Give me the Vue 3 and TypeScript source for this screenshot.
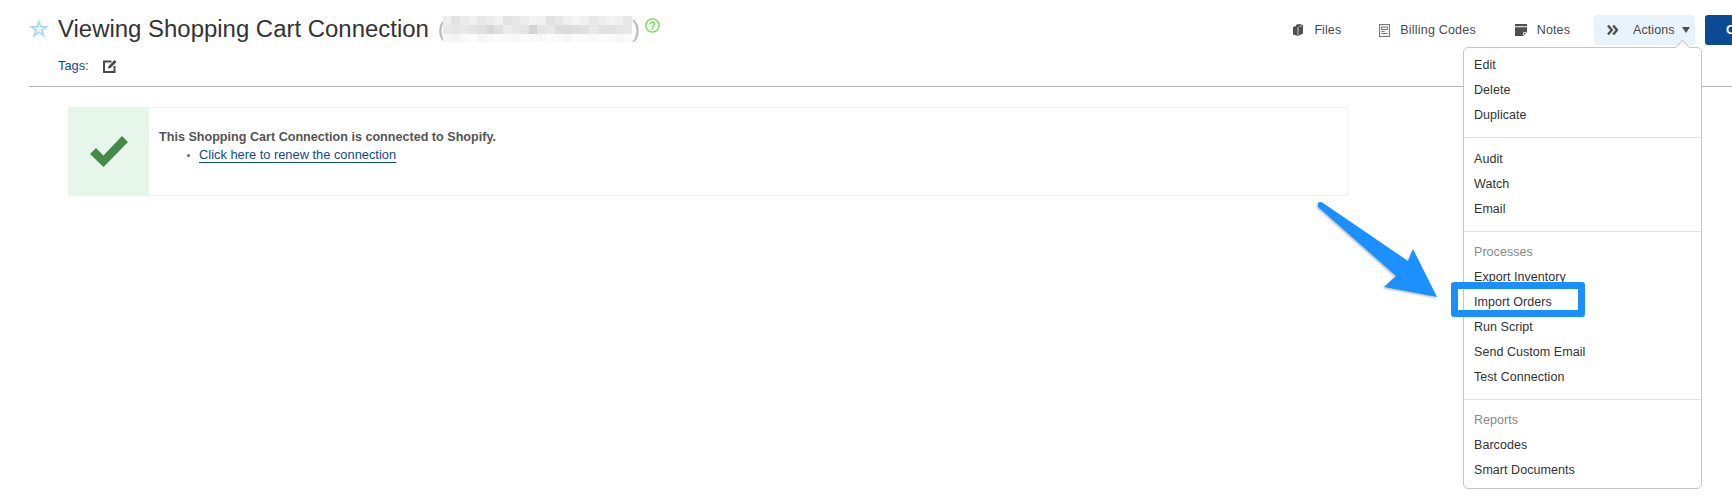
<template>
  <div class="page">
    <header class="header">
      <div class="title-block">
        <div class="title-row">
          <svg class="star" viewBox="0 0 20 19" width="20" height="19">
            <path d="M10 0l2.400 6.900H20l-6.100 4.500 2.300 7.200L10 14.200l-6.200 4.400 2.300-7.200L0 6.900h7.600z" fill="#a6d8f5" />
            <path d="M10 5l1.200 3.600h3.800l-3.100 2.300 1.200 3.700-3.100-2.300-3.100 2.300 1.200-3.700L5 8.600h3.800z" fill="#eef8fe" />
          </svg>
          <h1 class="title">Viewing Shopping Cart Connection</h1>
          <span class="paren">(</span>
          <span class="blurred">
            <i v-for="(shade, i) in blurCells" :key="i" :style="{ background: shade }"></i>
          </span>
          <span class="paren close">)</span>
          <svg class="help" viewBox="0 0 15 15" width="15" height="15">
            <circle cx="7.500" cy="7.500" r="6.600" fill="none" stroke="#72d957" stroke-width="1.300" />
            <path d="M5.300 6c0-2.700 4.400-2.700 4.400 0 0 1.600-2.200 1.500-2.200 3" fill="none" stroke="#72d957" stroke-width="1.300" />
            <rect x="6.800" y="10" width="1.400" height="1.500" fill="#72d957" />
          </svg>
        </div>
        <div class="tags-row">
          <span class="tags-label">Tags:</span>
          <svg class="tag-edit" viewBox="0 0 15 14" width="15" height="14">
            <path d="M8.500 2.500H1v10.500h10.500V7" fill="none" stroke="#4a4a4a" stroke-width="2" />
            <path d="M5 9.500l.6-2.600L11.500 1l2 2-5.900 6z" fill="#4a4a4a" />
          </svg>
        </div>
      </div>

      <nav class="toolbar">
        <a class="tool files">
          <svg viewBox="0 0 10 12" width="10" height="12">
            <path d="M0 3l3-1V.8L6.500 0 10 1v8.500L5 12l-5-1.500z" fill="#4f4f4f" />
            <path d="M5 3v8.500M6.500 2.500L9 1.800" stroke="#fff" stroke-width=".7" />
          </svg>
          Files
        </a>
        <a class="tool billing">
          <svg viewBox="0 0 11 13" width="11" height="13">
            <rect x=".5" y=".5" width="10" height="12" fill="#f1f1f1" stroke="#777" />
            <path d="M2.500 3h6v2.500h-6zM2.500 7.500h3M2.500 9.500h6" fill="none" stroke="#777" />
          </svg>
          Billing Codes
        </a>
        <a class="tool notes">
          <svg viewBox="0 0 12 12" width="12" height="12">
            <path d="M0 0h12v2.300H0zM0 3.300h12V8l-4 4H0z" fill="#4f4f4f" />
            <path d="M8.500 11V8.500H11" fill="none" stroke="#fff" stroke-width=".8" />
          </svg>
          Notes
        </a>
        <div class="actions-wrap">
          <a class="tool actions">
            <svg viewBox="0 0 12 10" width="12" height="10">
              <path d="M1 .5L4.800 5 1 9.500M6.200 .5L10 5 6.200 9.500" fill="none" stroke="#4f4f4f" stroke-width="2.400" />
            </svg>
            <span class="actions-label">Actions</span>
            <span class="caret"></span>
          </a>
          <div class="menu">
            <section v-for="group in menuGroups" :key="group.items[0]" class="menu-group">
              <div v-if="group.title" class="menu-title">{{ group.title }}</div>
              <a v-for="item in group.items" :key="item" class="menu-item">{{ item }}</a>
            </section>
          </div>
        </div>
        <button class="primary" type="button">C</button>
      </nav>
    </header>

    <main class="content">
      <div class="alert">
        <div class="alert-icon">
          <svg viewBox="0 0 38 31" width="38" height="31">
            <path d="M0 18l6-6 7.500 7.500L32 0l6 6-24.500 25z" fill="#468a49" />
          </svg>
        </div>
        <div class="alert-body">
          <strong>This Shopping Cart Connection is connected to Shopify.</strong>
          <ul>
            <li><a>Click here to renew the connection</a></li>
          </ul>
        </div>
      </div>
    </main>

    <!-- annotation drawn on top of the screenshot -->
    <svg class="pointer" viewBox="0 0 130 100" width="130" height="100">
      <defs>
        <filter id="arrow-shadow" x="-10%" y="-10%" width="120%" height="120%">
          <feDropShadow dx="-1" dy="1" stdDeviation="1" flood-color="#000" flood-opacity=".3" />
        </filter>
      </defs>
      <path
        d="M3 4.500C4 2.500 6 2.500 8 4L93 62 98 50 122 98 69 88 81 77 3 8z"
        fill="#1a90ff"
        filter="url(#arrow-shadow)"
      />
    </svg>
    <div class="highlight"></div>
  </div>
</template>

<script setup lang="ts">
interface MenuGroup {
  title?: string
  items: string[]
}

const menuGroups: MenuGroup[] = [
  { items: ['Edit', 'Delete', 'Duplicate'] },
  { items: ['Audit', 'Watch', 'Email'] },
  { title: 'Processes', items: ['Export Inventory', 'Import Orders', 'Run Script', 'Send Custom Email', 'Test Connection'] },
  { title: 'Reports', items: ['Barcodes', 'Smart Documents'] }
]

// pixelated name, kept as a mosaic of greys
const rows = [
  [238, 226, 234, 240, 232, 236, 242, 228, 232, 236, 244, 240, 226, 232, 240, 244, 240, 232, 238, 242, 240, 232],
  [232, 230, 232, 228, 224, 216, 224, 236, 232, 228, 212, 228, 232, 222, 220, 222, 224, 232, 226, 224, 228, 232],
  [246, 244, 250, 252, 246, 250, 252, 250, 248, 252, 250, 248, 252, 250, 246, 252, 250, 248, 252, 250, 246, 250]
]
const blurCells = rows.flat().map((v) => `rgb(${v}, ${v}, ${v})`)
</script>

<style scoped>
.page {
  position: relative;
  width: 1732px;
  height: 501px;
  overflow: hidden;
  background: #fff;
  color: #333;
  font-family: "Liberation Sans", Arial, sans-serif;
}

.header {
  display: flex;
  justify-content: space-between;
  height: 86px;
  margin-left: 29px;
  border-bottom: 1px solid #b4b4b4;
}

.title-row {
  display: flex;
  align-items: center;
  height: 30px;
  margin-top: 14px;
}

.star {
  flex: none;
  margin-right: 9px;
  margin-top: -1px;
}

.title {
  margin: 0;
  font-size: 23.950px;
  font-weight: 400;
  color: #333;
  white-space: nowrap;
}

.paren {
  margin-left: 9px;
  font-size: 24px;
  color: #b9b9b9;
}

.paren.close {
  margin-left: 0;
}

.blurred {
  display: grid;
  grid-template-columns: repeat(22, 8.600px);
  grid-template-rows: 9px 9px 8px;
  margin-left: -3px;
  filter: blur(0.5px);
}

.help {
  margin-left: 5px;
  margin-top: -8px;
}

.tags-row {
  display: flex;
  align-items: center;
  gap: 14px;
  margin: 14px 0 0 29px;
}

.tags-label {
  font-size: 12.800px;
  color: #0d4a94;
}

.toolbar {
  display: flex;
  flex: none;
  align-items: flex-start;
  margin-top: 15px;
  margin-right: -60px;
}

.tool {
  display: flex;
  align-items: center;
  gap: 10px;
  height: 30px;
  margin-right: 40px;
  font-size: 12.500px;
  letter-spacing: 0.1px;
  color: #4a4a4a;
}

.tool.files {
  gap: 11px;
  margin-right: 38px;
}

.tool.billing {
  margin-right: 39px;
  letter-spacing: 0.2px;
}

.tool.notes {
  margin-right: 24px;
}

.actions-wrap {
  position: relative;
  margin-right: 10px;
}

.actions {
  width: 101px;
  box-sizing: border-box;
  margin: 0;
  padding-left: 13px;
  gap: 0;
  background: #e8f3fd;
  border-radius: 3px;
}

.actions-label {
  margin-left: 14px;
}

.caret {
  width: 0;
  height: 0;
  margin-left: 7px;
  border-left: 4px solid transparent;
  border-right: 4px solid transparent;
  border-top: 6px solid #4f4f4f;
}

.primary {
  width: 87px;
  height: 30px;
  padding: 0 0 0 21px;
  text-align: left;
  border: 0;
  border-radius: 3px;
  background: #0d4a94;
  color: #fff;
  font: 700 12.500px "Liberation Sans", Arial, sans-serif;
}

.menu {
  position: absolute;
  top: 32px;
  right: -7px;
  z-index: 2;
  width: 239px;
  box-sizing: border-box;
  background: #fff;
  border: 1px solid #c6c6c6;
  border-radius: 5px;
}

.menu::before {
  content: "";
  position: absolute;
  top: -6px;
  right: 13px;
  width: 10px;
  height: 10px;
  background: #fff;
  border-left: 1px solid #c6c6c6;
  border-top: 1px solid #c6c6c6;
  transform: rotate(45deg);
}

.menu-group {
  padding: 7.500px 0 10px;
  border-bottom: 1px solid #e2e2e2;
}

.menu-group:first-child {
  padding-top: 4px;
}

.menu-group:last-child {
  padding-top: 6.500px;
  padding-bottom: 6px;
  border-bottom: 0;
}

.menu-title,
.menu-item {
  display: block;
  height: 25px;
  padding-left: 10px;
  line-height: 27px;
  font-size: 12.500px;
  letter-spacing: 0.05px;
  white-space: nowrap;
}

.menu-title {
  color: #888;
}

.menu-item {
  color: #333;
}

.content {
  padding: 20px 0 0 68px;
}

.alert {
  display: flex;
  width: 1280px;
  height: 89px;
  box-sizing: border-box;
  border: 1px solid #e6f6ea;
}

.alert-icon {
  display: flex;
  align-items: center;
  justify-content: center;
  flex: none;
  width: 80px;
  background: #e6f6ea;
}

.alert-body {
  padding: 20px 0 0 10px;
  font-size: 12.600px;
  line-height: 18px;
  color: #555;
}

.alert-body ul {
  margin: 0;
  padding-left: 40px;
  list-style: none;
}

.alert-body li {
  position: relative;
}

.alert-body li::before {
  content: "";
  position: absolute;
  left: -12px;
  top: 8px;
  width: 3px;
  height: 3px;
  border-radius: 50%;
  background: #666;
}

.alert-body a {
  color: #0d4a94;
  border-bottom: 1px solid #0d4a94;
  font-size: 12.850px;
}

.pointer {
  position: absolute;
  left: 1315px;
  top: 199px;
  overflow: visible;
}

.highlight {
  position: absolute;
  z-index: 3;
  left: 1451px;
  top: 282px;
  width: 134px;
  height: 35px;
  box-sizing: border-box;
  border: 7px solid #1a90ff;
  border-radius: 3px;
}
</style>

<style>
html,
body {
  margin: 0;
  overflow: hidden;
}
</style>
